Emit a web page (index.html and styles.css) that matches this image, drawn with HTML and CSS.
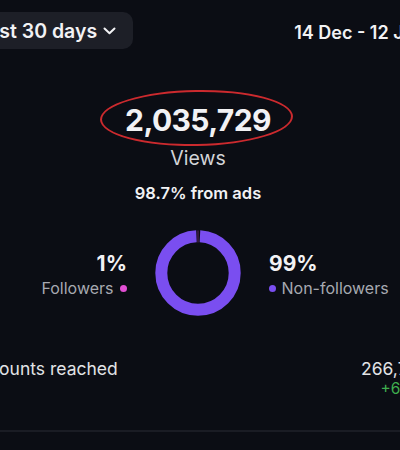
FILE: index.html
```html
<!DOCTYPE html>
<html>
<head>
<meta charset="utf-8">
<link rel="stylesheet" href="styles.css">
</head>
<body>
<div class="screen">
  <div class="header">
    <button class="range">Last 30 days
      <svg class="chev" width="13" height="8" viewBox="0 0 13 8"><path d="M1.5 1.5 L6.5 6.3 L11.5 1.5" fill="none" stroke="#f2f2f4" stroke-width="2" stroke-linecap="round" stroke-linejoin="round"/></svg>
    </button>
    <div class="date">14 Dec - 12 Jan</div>
  </div>

  <div class="hero">
    <div class="number-wrap">
      <div class="views-number">2,035,729</div>
      <div class="circle-mark"></div>
    </div>
    <div class="views-label">Views</div>
    <div class="ads">98.7% from ads</div>
  </div>

  <div class="split">
    <div class="legend left">
      <div class="pct">1%</div>
      <div class="name">Followers <span class="dot pink"></span></div>
    </div>
    <svg class="donut" width="86" height="86" viewBox="0 0 86 86">
      <circle cx="43" cy="43" r="36.7" fill="none" stroke="#7a4ef0" stroke-width="12" stroke-dasharray="226.6 4" stroke-dashoffset="-2" transform="rotate(-90 43 43)"/>
      <rect x="42.4" y="0.5" width="1.2" height="12" fill="#d04ad0" opacity="0.35"/>
    </svg>
    <div class="legend right">
      <div class="pct">99%</div>
      <div class="name"><span class="dot purple"></span> Non-followers</div>
    </div>
  </div>

  <div class="reach">
    <div class="reach-label">Accounts reached</div>
    <div class="reach-values">
      <div class="reach-num">266,789</div>
      <div class="reach-delta">+6.2%</div>
    </div>
  </div>
  <div class="divider"></div>
</div>
</body>
</html>
```

FILE: styles.css
```css
html, body {
  margin: 0;
  padding: 0;
  background: #0b0d14;
  overflow: hidden;
  width: 400px;
  height: 450px;
}
body {
  font-family: Inter, "Noto Sans", "DejaVu Sans", sans-serif;
  color: #f2f2f4;
}
.screen {
  width: 494px;
  margin-left: -49px;
  padding: 0 16px;
  box-sizing: border-box;
}
.header {
  display: flex;
  justify-content: space-between;
  align-items: center;
  margin-top: 12px;
  height: 37px;
}
.range {
  display: flex;
  align-items: center;
  gap: 6px;
  height: 37px;
  padding: 0 17px 0 17px;
  margin-left: -7px;
  background: #1d1f27;
  border: none;
  border-radius: 10px;
  color: #f2f2f4;
  font-family: inherit;
  font-size: 19.5px;
  font-weight: 600;
}
.chev { margin-top: 1px; }
.date {
  font-size: 18px;
  font-weight: 600;
  margin-top: 4px;
  margin-right: 4px;
  white-space: nowrap;
}
.hero {
  text-align: center;
  margin-top: 53px;
}
.number-wrap {
  position: relative;
  display: inline-block;
}
.views-number {
  font-size: 30px;
  line-height: 36px;
  font-weight: 700;
  letter-spacing: -0.6px;
}
.circle-mark {
  position: absolute;
  left: -25px;
  right: -22px;
  top: -12px;
  bottom: -8px;
  border: 2.5px solid #cc2a2e;
  border-radius: 50%;
  transform: rotate(-1deg);
}
.views-label {
  font-size: 19.5px;
  line-height: 24px;
  margin-top: 8px;
  color: #d3d4d8;
}
.ads {
  font-size: 16.5px;
  line-height: 20px;
  font-weight: 600;
  margin-top: 13px;
}
.split {
  display: grid;
  grid-template-columns: 1fr auto 1fr;
  column-gap: 28px;
  align-items: center;
  margin-top: 27px;
}
.donut { display: block; }
.legend { margin-top: 4px; }
.legend.left { text-align: right; }
.pct {
  font-size: 21px;
  line-height: 26px;
  font-weight: 700;
}
.name {
  font-size: 16px;
  line-height: 22px;
  color: #a7a9b1;
  white-space: nowrap;
}
.dot {
  display: inline-block;
  width: 7px;
  height: 7px;
  border-radius: 50%;
  vertical-align: 2px;
}
.pink { background: #e24fd4; margin-left: 2px; }
.purple { background: #7a4ef0; margin-right: 1px; }
.reach {
  display: flex;
  justify-content: space-between;
  align-items: flex-start;
  margin-top: 42px;
}
.reach-label {
  font-size: 17.5px;
  line-height: 22px;
  color: #e2e3e6;
}
.reach-values { text-align: right; }
.reach-num {
  font-size: 17.5px;
  line-height: 22px;
  color: #e2e3e6;
}
.reach-delta {
  font-size: 15.5px;
  line-height: 18px;
  color: #3fae4f;
}
.divider {
  height: 2px;
  background: #1a1c24;
  margin-top: 32px;
}
```
